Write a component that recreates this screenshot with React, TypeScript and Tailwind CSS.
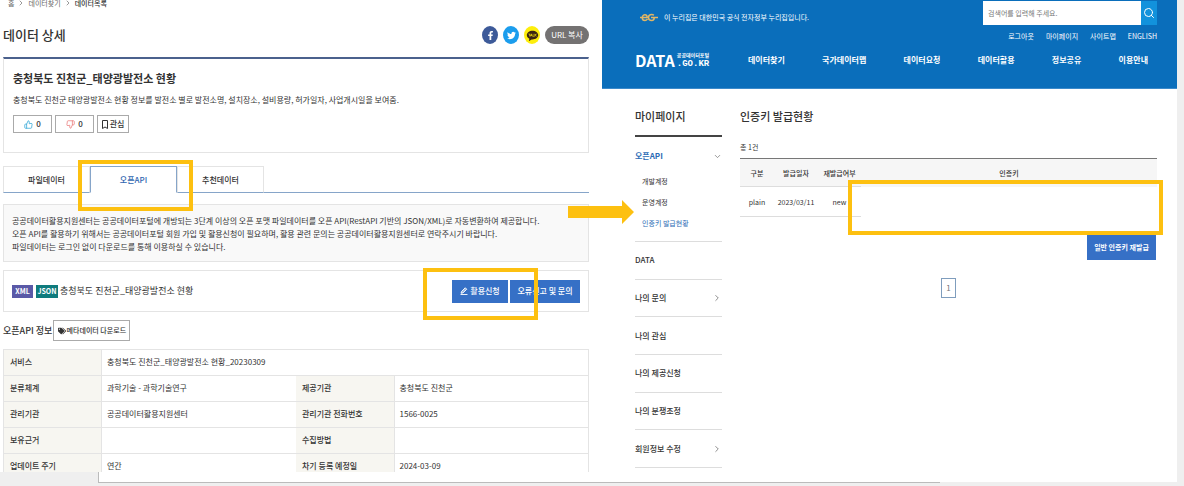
import { clsx } from "clsx";
import { FaFacebookF, FaTags, FaTwitter } from "react-icons/fa";
import { FiChevronDown, FiChevronRight, FiSearch, FiThumbsDown, FiThumbsUp } from "react-icons/fi";
import { RiKakaoTalkFill } from "react-icons/ri";

const NAV = ["데이터찾기", "국가데이터맵", "데이터요청", "데이터활용", "정보공유", "이용안내"];
const UTIL = ["로그아웃", "마이페이지", "사이트맵", "ENGLISH"];
const TABS = ["파일데이터", "오픈API", "추천데이터"];

const SUBMENU = [
    { label: "개발계정", active: false },
    { label: "운영계정", active: false },
    { label: "인증키 발급현황", active: true },
];

const MENU = [
    { label: "DATA", arrow: false },
    { label: "나의 문의", arrow: true },
    { label: "나의 관심", arrow: false },
    { label: "나의 제공신청", arrow: false },
    { label: "나의 분쟁조정", arrow: false },
    { label: "회원정보 수정", arrow: true },
];

const META = [
    ["분류체계", "과학기술 - 과학기술연구", "제공기관", "충청북도 진천군"],
    ["관리기관", "공공데이터활용지원센터", "관리기관 전화번호", "1566-0025"],
    ["보유근거", "", "수집방법", ""],
    ["업데이트 주기", "연간", "차기 등록 예정일", "2024-03-09"],
];

// Yellow frame that marks the next step
function Highlight({ className }: { className: string }) {
    return <div className={clsx("pointer-events-none absolute z-10 border-4 border-[#fdc010]", className)} />;
}

function PencilIcon() {
    return (
        <svg viewBox="0 0 16 16" className="h-2 w-2" fill="none" stroke="currentColor" strokeWidth="1.8">
            <path d="M2 12.5 3 9l7.5-7.5L13.500 4.500 6 11.800z" fill="currentColor" fillOpacity="0.5" />
            <path d="M1 15h14" />
        </svg>
    );
}

function BookmarkIcon() {
    return (
        <svg viewBox="0 0 12 18" className="h-[9px] w-[6px]" fill="none" stroke="currentColor" strokeWidth="2">
            <path d="M1 1h10v16l-5-3-5 3z" />
        </svg>
    );
}

function EgLogo() {
    return (
        <svg viewBox="0 0 36 18" className="h-[9px] w-[18px]" fill="none" stroke="#e0b667" strokeWidth="3">
            <path d="M0 9h14.500c0-3.500-2-5.500-4.500-5.500S4.500 6 4.500 9.500 7 15 10 15c2 0 3.500-1 5-3" />
            <path d="M28 4.500C26.500 3.500 25 3 23.500 3 19.500 3 17 5.500 17 9s2.500 6 6.500 6c3 0 5-2 5-6H36M22 9h6" />
        </svg>
    );
}

function ShareButtons() {
    const round = "flex h-[18px] w-4 items-center justify-center rounded-[50%]";
    return (
        <div className="flex items-center gap-[5px]">
            <button className={clsx(round, "bg-[#3d5a99] text-white")} aria-label="Facebook">
                <FaFacebookF className="size-[9px]" />
            </button>
            <button className={clsx(round, "bg-[#1b9ded] text-white")} aria-label="Twitter">
                <FaTwitter className="size-[9px]" />
            </button>
            <button className={clsx(round, "bg-[#fdee0c] text-[#3a2412]")} aria-label="KakaoTalk">
                <RiKakaoTalkFill className="size-[13px]" />
            </button>
            <button className="h-[18px] w-[44px] rounded-full bg-[#747272] text-[8px] text-white">URL 복사</button>
        </div>
    );
}

function DatasetCard() {
    const btn = "flex h-[18px] items-center justify-center border border-[#aaa] text-[8px] font-medium";
    return (
        <section className="mt-[13px] h-24 border border-t-2 border-[#e4e4e4] border-t-[#4b618d] px-[9px] pt-[10px]">
            <h2 className="text-[11px] leading-[18px] font-bold">충청북도 진천군_태양광발전소 현황</h2>
            <p className="mt-[7px] text-[8px] leading-3">
                충청북도 진천군 태양광발전소 현황 정보를 발전소 별로 발전소명, 설치장소, 설비용량, 허가일자, 사업개시일을
                보여줌.
            </p>
            <div className="mt-[9px] flex gap-[3px]">
                <button className={clsx(btn, "w-[39px] gap-[3px]")} aria-label="좋아요">
                    <FiThumbsUp className="size-[9px] text-[#2fa5d5]" />0
                </button>
                <button className={clsx(btn, "w-[39px] gap-[3px]")} aria-label="싫어요">
                    <FiThumbsDown className="size-[9px] text-[#ea7a7a]" />0
                </button>
                <button className={clsx(btn, "w-8 gap-[2px]")}>
                    <BookmarkIcon />
                    관심
                </button>
            </div>
        </section>
    );
}

function Tabs() {
    return (
        <div className="mt-[13px] flex h-[27px] border-b border-[#86a5c9]" role="tablist">
            {TABS.map((tab, i) => (
                <button
                    key={tab}
                    role="tab"
                    aria-selected={i === 1}
                    className={clsx(
                        "relative h-[27px] w-[87px] border text-[8px] font-medium",
                        i === 1
                            ? "border-[#86a5c9] border-b-white bg-white text-[#3066b0]"
                            : "border-[#e4e4e4] border-b-[#86a5c9]",
                    )}
                >
                    {tab}
                    {i === 1 && <Highlight className="-top-[7px] -right-[17px] -bottom-[19px] -left-[13px]" />}
                </button>
            ))}
        </div>
    );
}

function ApiInfo() {
    const th = "bg-[#f7f6f1] px-[6px] pb-[2px] text-left font-medium";
    const td = "border-l border-[#e4e4e4] px-[5px] pb-[2px]";
    return (
        <>
            <div className="mt-2 flex items-center gap-px">
                <h3 className="text-[9px] leading-4 font-medium">오픈API 정보</h3>
                <button className="flex h-[21px] w-[77px] items-center justify-center gap-px border border-[#aaa] text-[7px] font-medium">
                    <FaTags className="size-2" />
                    메타데이터 다운로드
                </button>
            </div>
            <table className="mt-2 w-full table-fixed border border-[#e4e4e4] text-[8px] leading-3">
                <colgroup>
                    <col className="w-[98px]" />
                    <col />
                    <col className="w-[98px]" />
                    <col />
                </colgroup>
                <tbody>
                    <tr className="h-[26px] border-b border-[#e4e4e4]">
                        <th className={th}>서비스</th>
                        <td className={td} colSpan={3}>
                            충청북도 진천군_태양광발전소 현황_20230309
                        </td>
                    </tr>
                    {META.map(([k1, v1, k2, v2]) => (
                        <tr key={k1} className="h-[26px] border-b border-[#e4e4e4]">
                            <th className={th}>{k1}</th>
                            <td className={td}>{v1}</td>
                            <th className={th}>{k2}</th>
                            <td className={td}>{v2}</td>
                        </tr>
                    ))}
                </tbody>
            </table>
        </>
    );
}

function DatasetPage() {
    const action = "flex h-[23px] items-center justify-center gap-[2px] bg-[#3670c6] text-[8px] font-medium text-white";
    return (
        <div className="min-h-0 flex-1 overflow-hidden pr-[13px] pl-[3px]">
            <nav className="-mt-1 flex h-[14px] items-center gap-[3px] pl-[5px] text-[7px] leading-[14px] text-[#666]">
                <a href="#">홈</a>
                <FiChevronRight className="size-2" />
                <a href="#">데이터찾기</a>
                <FiChevronRight className="size-2" />
                <a href="#" className="font-medium text-[#333]">
                    데이터목록
                </a>
            </nav>
            <div className="mt-4 flex h-[18px] items-center justify-between">
                <h1 className="text-[13px] leading-[18px] font-medium">데이터 상세</h1>
                <ShareButtons />
            </div>
            <DatasetCard />
            <Tabs />
            <div className="mt-[11px] h-[58px] border border-[#e4e4e4] bg-[#f9f9f9] px-2 pt-[9px] text-[8px] leading-[13px]">
                <p>
                    공공데이터활용지원센터는 공공데이터포털에 개방되는 3단계 이상의 오픈 포맷 파일데이터를 오픈
                    API(RestAPI 기반의 JSON/XML)로 자동변환하여 제공합니다.
                </p>
                <p>
                    오픈 API를 활용하기 위해서는 공공데이터포털 회원 가입 및 활용신청이 필요하며, 활용 관련 문의는
                    공공데이터활용지원센터로 연락주시기 바랍니다.
                </p>
                <p>파일데이터는 로그인 없이 다운로드를 통해 이용하실 수 있습니다.</p>
            </div>
            <div className="mt-2 flex h-[42px] items-center border border-[#e4e4e4] px-2">
                <span className="flex h-[13px] w-[21px] items-center justify-center bg-[#5a59a7] text-[7px] font-bold text-white">
                    XML
                </span>
                <span className="ml-[3px] flex h-[13px] w-[22px] items-center justify-center bg-[#0f7b7d] text-[7px] font-bold text-white">
                    JSON
                </span>
                <p className="ml-[2px] text-[9px] leading-4">충청북도 진천군_태양광발전소 현황</p>
                <div className="ml-auto flex gap-[2px]">
                    <div className="relative">
                        <button className={clsx(action, "w-14")}>
                            <PencilIcon />
                            활용신청
                        </button>
                        <Highlight className="-top-[12px] -right-[30px] -bottom-[17px] -left-[29px]" />
                    </div>
                    <button className={clsx(action, "w-[70px]")}>오류신고 및 문의</button>
                </div>
            </div>
            <ApiInfo />
        </div>
    );
}

function PortalHeader() {
    return (
        <header className="h-[89px] border-b border-[#3b8acb] bg-[#0a6ebb] pr-5 pl-[33px] text-white">
            <div className="flex h-[25px] items-start justify-between">
                <div className="flex h-[34px] items-center gap-[6px] pl-[5px] text-[7px]">
                    <EgLogo />
                    이 누리집은 대한민국 공식 전자정부 누리집입니다.
                </div>
                <form className="flex h-[25px] w-[174px] pt-px">
                    <input
                        type="text"
                        aria-label="검색어"
                        placeholder="검색어를 입력해 주세요."
                        className="min-w-0 flex-1 bg-white px-[5px] text-[7px] text-[#333] placeholder:text-[#777]"
                    />
                    <button
                        type="button"
                        className="flex w-4 items-center justify-center bg-[#1292dc]"
                        aria-label="검색"
                    >
                        <FiSearch className="size-3" />
                    </button>
                </form>
            </div>
            <div className="flex h-[22px] items-center justify-end gap-3 text-[7px]">
                {UTIL.map((item) => (
                    <a key={item} href="#">
                        {item}
                    </a>
                ))}
            </div>
            <div className="flex h-[26px] items-center">
                <a href="#" className="flex w-[73px] items-center gap-[2px]" aria-label="공공데이터포털">
                    <span className="text-[16px] leading-6 font-bold">DATA</span>
                    <span className="flex flex-col whitespace-nowrap">
                        <span className="text-[5px] leading-[8px] font-bold">공공데이터포털</span>
                        <span className="font-['Liberation_Mono',monospace] text-[9px] leading-[10px] font-bold">
                            .GO.KR
                        </span>
                    </span>
                </a>
                <nav className="ml-10 flex flex-1 justify-between pr-[9px] text-[8px] font-bold">
                    {NAV.map((item) => (
                        <a key={item} href="#">
                            {item}
                        </a>
                    ))}
                </nav>
            </div>
        </header>
    );
}

function Sidebar() {
    return (
        <aside className="w-[87px] text-[8px]">
            <h2 className="h-12 border-b-2 border-[#444] pt-[17px] text-[11px] leading-5 font-medium">마이페이지</h2>
            <a href="#" className="flex h-[34px] items-center justify-between pt-1 font-bold text-[#2c6cb5]">
                오픈API
                <FiChevronDown className="size-[9px] text-[#777]" />
            </a>
            <ul className="h-[71px] border-b border-[#ddd] pl-[7px] text-[7px] leading-[21px]">
                {SUBMENU.map(({ label, active }) => (
                    <li key={label}>
                        <a href="#" className={clsx(active && "text-[#2c6cb5]")}>
                            {label}
                        </a>
                    </li>
                ))}
            </ul>
            <ul className="grid h-[226px] grid-rows-6 font-medium">
                {MENU.map(({ label, arrow }) => (
                    <li key={label} className="border-b border-[#ddd]">
                        <a href="#" className="flex h-full items-center justify-between">
                            {label}
                            {arrow && <FiChevronRight className="size-[10px] text-[#777]" />}
                        </a>
                    </li>
                ))}
            </ul>
        </aside>
    );
}

function KeyStatus() {
    return (
        <main className="flex min-w-0 flex-1 flex-col pt-[17px]">
            <h1 className="text-[11px] leading-5 font-medium">인증키 발급현황</h1>
            <p className="mt-[15px] text-[7px] leading-3">총 1건</p>
            <div className="relative mt-[5px]">
                <table className="w-full table-fixed text-center text-[7px] leading-3">
                    <colgroup>
                        <col className="w-[34px]" />
                        <col className="w-[44px]" />
                        <col className="w-[43px]" />
                        <col />
                    </colgroup>
                    <thead>
                        <tr className="h-[28px] border-t border-[#777] bg-[#f6f6f6]">
                            <th className="font-medium">구분</th>
                            <th className="font-medium">발급일자</th>
                            <th className="font-medium">재발급여부</th>
                            <th className="font-medium">인증키</th>
                        </tr>
                    </thead>
                    <tbody>
                        <tr className="h-[30px]">
                            <td className="border-y border-[#ddd]">plain</td>
                            <td className="border-y border-[#ddd]">2023/03/11</td>
                            <td className="border-y border-[#ddd]">new</td>
                            <td />
                        </tr>
                    </tbody>
                </table>
                <Highlight className="top-[22px] -right-[6px] left-[108px] h-[55px]" />
            </div>
            <button className="mt-[18px] mr-px h-[25px] w-[69px] self-end bg-[#3670c6] text-[7px] font-bold text-white">
                일반 인증키 재발급
            </button>
            <button className="mt-[18px] h-5 w-[15px] self-center border border-[#7f9dbd] text-[8px] text-[#777]">
                1
            </button>
        </main>
    );
}

export default function App() {
    return (
        <div className="relative flex h-screen flex-col overflow-hidden bg-[#efefef] font-['Noto_Sans_CJK_KR',sans-serif] text-[#333]">
            <div className="grid min-h-0 flex-1 grid-cols-[602fr_582fr]">
                <div className="flex min-h-0 flex-col bg-white">
                    <DatasetPage />
                    <div className="flex h-[10px] bg-[#efefef]">
                        <div className="ml-[98px] flex-1 border-l border-[#bbb] bg-white" />
                    </div>
                </div>
                <div className="mr-[7px] min-h-0 bg-white">
                    <PortalHeader />
                    <div className="flex gap-[18px] pr-5 pl-[33px]">
                        <Sidebar />
                        <KeyStatus />
                    </div>
                </div>
            </div>
            <div className="h-1">
                <div className="mr-[20.6%] ml-[98px] border-t border-[#bbb]" />
            </div>

            {/* arrow between the two steps */}
            <svg viewBox="0 0 66 24" className="absolute top-[200px] left-[48%] h-6 w-[66px]" fill="#fdc010">
                <path d="M0 6h54V0l12 12-12 12v-6H0z" />
            </svg>
        </div>
    );
}
